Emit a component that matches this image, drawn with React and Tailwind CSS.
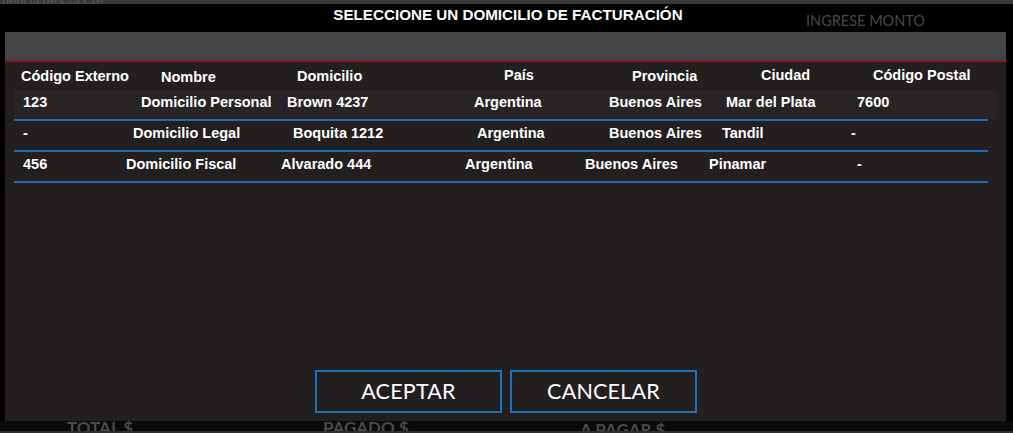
import React from 'react';

const headers = [
    { label: 'Código Externo', cls: 'w-[140px]' },
    { label: 'Nombre', cls: 'w-[136px] pt-[2px]' },
    { label: 'Domicilio', cls: 'w-[207px]' },
    { label: 'País', cls: 'w-[128px] -mt-[2px]' },
    { label: 'Provincia', cls: 'w-[129px]' },
    { label: 'Ciudad', cls: 'w-[112px] -mt-[2px]' },
    { label: 'Código Postal', cls: 'flex-1 -mt-[2px]' },
];

const rows = [
    {
        bg: 'bg-[#282425]',
        cells: [
            { text: '123', cls: 'w-[118px]' },
            { text: 'Domicilio Personal', cls: 'w-[146px]' },
            { text: 'Brown 4237', cls: 'w-[187px]' },
            { text: 'Argentina', cls: 'w-[135px]' },
            { text: 'Buenos Aires', cls: 'w-[117px]' },
            { text: 'Mar del Plata', cls: 'w-[131px]' },
            { text: '7600', cls: 'flex-1' },
        ],
    },
    {
        bg: '',
        cells: [
            { text: '-', cls: 'w-[110px]' },
            { text: 'Domicilio Legal', cls: 'w-[160px]' },
            { text: 'Boquita 1212', cls: 'w-[184px]' },
            { text: 'Argentina', cls: 'w-[132px]' },
            { text: 'Buenos Aires', cls: 'w-[113px]' },
            { text: 'Tandil', cls: 'w-[129px]' },
            { text: '-', cls: 'flex-1' },
        ],
    },
    {
        bg: '',
        cells: [
            { text: '456', cls: 'w-[103px]' },
            { text: 'Domicilio Fiscal', cls: 'w-[155px]' },
            { text: 'Alvarado 444', cls: 'w-[184px]' },
            { text: 'Argentina', cls: 'w-[120px]' },
            { text: 'Buenos Aires', cls: 'w-[124px]' },
            { text: 'Pinamar', cls: 'w-[148px]' },
            { text: '-', cls: 'flex-1' },
        ],
    },
];

export default function App() {
    return (
        <div className="w-[1013px] h-[433px] bg-black flex flex-col overflow-hidden relative font-['Liberation_Sans',Arial,sans-serif]">
            {/* strip of the page behind the overlay */}
            <div className="h-[4px] bg-[#3a3a3a] overflow-hidden">
                <div className="-mt-[9px] ml-[2px] text-[13px] text-[#5a5a5a] font-['Lato',sans-serif]">dencia de Cta Cte</div>
            </div>

            {/* Title */}
            <div className="h-[28px] flex items-center justify-center relative">
                <h1 className="text-[15.2px] font-bold text-white -mt-[5px] ml-[3px]">
                    SELECCIONE UN DOMICILIO DE FACTURACIÓN
                </h1>
                <span className="absolute left-[806px] top-[6px] text-[14.5px] text-[#484848] font-['Lato',sans-serif]">INGRESE MONTO</span>
            </div>

            {/* Modal */}
            <div className="ml-[5px] w-[1001px] h-[389px] bg-[#231f20] flex flex-col">
                <div className="h-[30px] bg-[#464648] border-b-2 border-[#8a1a20]" />

                {/* Header row */}
                <div className="h-[28px] ml-[9px] w-[974px] pl-[7px] pt-[1px] flex items-center text-[14.5px] font-bold text-white">
                    {headers.map((h) => (
                        <span key={h.label} className={h.cls}>{h.label}</span>
                    ))}
                </div>

                {/* Rows */}
                <div className="ml-[9px] w-[983px] flex flex-col">
                    {rows.map((row, i) => (
                        <div key={i} className="flex flex-col">
                            <div className={`h-[29px] flex items-center pl-[9px] pb-[3px] text-[14.5px] font-bold text-white whitespace-nowrap ${row.bg}`}>
                                {row.cells.map((c, j) => (
                                    <span key={j} className={c.cls}>{c.text}</span>
                                ))}
                            </div>
                            <div className="h-[2px] w-[974px] bg-[#1d6bb3]" />
                        </div>
                    ))}
                </div>

                <div className="flex-1" />

                {/* Buttons */}
                <div className="flex justify-center gap-[8px] pl-[1px] pb-[8px] font-['Lato',sans-serif]">
                    <button className="w-[187px] h-[43px] border-2 border-[#1f73bd] text-white text-[21.5px] tracking-[0.2px]">ACEPTAR</button>
                    <button className="w-[187px] h-[43px] border-2 border-[#1f73bd] text-white text-[21.5px] tracking-[0.2px]">CANCELAR</button>
                </div>
            </div>

            {/* totals strip behind the overlay */}
            <div className="h-[12px] bg-[#0a0a0a] relative overflow-hidden font-['Lato',sans-serif] font-bold text-[17px] text-[#4a4a4a]">
                <span className="absolute left-[67px] -top-[6px]">TOTAL $</span>
                <span className="absolute left-[323px] -top-[6px]">PAGADO $</span>
                <span className="absolute left-[580px] -top-[4px]">A PAGAR $</span>
                <div className="absolute left-0 bottom-0 w-full h-[2px] bg-[#2e2e2e]" />
            </div>
        </div>
    );
}
